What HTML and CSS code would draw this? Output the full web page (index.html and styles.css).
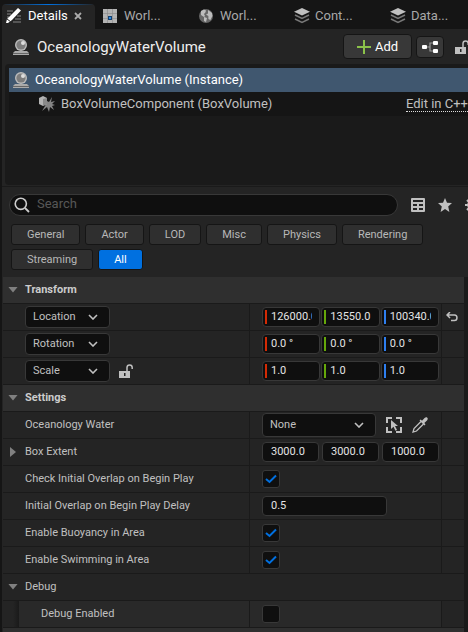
FILE: index.html
```html
<!DOCTYPE html>
<html lang="en">
<head>
<meta charset="utf-8">
<meta name="viewport" content="width=device-width, initial-scale=1">
<title>Details</title>
<link rel="stylesheet" href="styles.css">
</head>
<body>
<svg class="defs" aria-hidden="true">
  <symbol id="actor" viewBox="0 0 16 16">
    <path d="M0 16v-2l2-2h12l2 2v2z" fill="#aaa"/><path d="M0 14h16v1H0z" fill="#666"/>
    <circle cx="8" cy="6" r="6" fill="#bbb"/><circle cx="8" cy="6" r="4.6" fill="#7d7d7d"/><circle cx="10" cy="4" r="2" fill="#ddd"/>
  </symbol>
  <symbol id="chevron" viewBox="0 0 10 6"><path d="M1 1l4 4 4-4" fill="none" stroke="#c0c0c0" stroke-width="1.6"/></symbol>
  <symbol id="layers" viewBox="0 0 16 16">
    <path d="M8 0l8 3.7-8 3.8-8-3.8z" fill="#c0c0c0"/>
    <path d="M1 7l7 3.4L15 7M1 11l7 3.4 7-3.4" fill="none" stroke="#777" stroke-width="1.6"/>
  </symbol>
  <symbol id="lock" viewBox="0 0 14 14">
    <path d="M0 7h11v7H0z" fill="#c0c0c0"/><path d="M5 9h1.5v3H5z" fill="#222"/>
    <path d="M8 7V3.5C8 0 13.2 0 13.2 3.5V5" fill="none" stroke="#c0c0c0" stroke-width="1.5"/>
  </symbol>
</svg>

<nav class="tabs">
  <a class="tab active" href="#details">
    <svg class="i16" viewBox="0 0 16 16"><path d="M7 3H1M5 6H1M3 9H1M9 11h6M7 14h8M11 8h4" stroke="#666" stroke-width="1.4"/><path d="M12 0l3 2.6L6 12l-4 3H0l1-4z" fill="#fff"/><path d="M1 11l3.5 2.6" stroke="#242424"/></svg>
    <span>Details</span>
    <svg class="close" viewBox="0 0 8 8"><path d="M1 1l6 6M7 1L1 7" stroke="#aaa" stroke-width="1.8"/></svg>
  </a>
  <a class="tab" href="#world-1">
    <svg class="i14" viewBox="0 0 14 14"><path d="M0 0h14v14H0z" fill="#b4b4b4"/><path d="M4.5 0v14M9.5 0v14M0 4.5h14M0 9.5h14" stroke="#888" stroke-width=".6"/><path d="M5 7h4v4H5z" fill="#15406f"/><path d="M6 8h2v2H6z" fill="#2f8be0"/></svg>
    <span>Worl...</span>
  </a>
  <a class="tab" href="#world-2">
    <svg class="i14" viewBox="0 0 14 14"><circle cx="7" cy="7" r="7" fill="#676767"/><path d="M2 2l3-1.6 2 1-.6 2L5 5l1 2-1 1-3-2zM9 1l4 3 .4 3-2 4-2-1V7L7 5.500l2-1zM5 8l3 1-1 4-2-1z" fill="#bdbdbd"/></svg>
    <span>Worl...</span>
  </a>
  <a class="tab" href="#content">
    <svg class="i16"><use href="#layers"/></svg><span>Cont...</span>
  </a>
  <a class="tab" href="#data">
    <svg class="i16"><use href="#layers"/></svg><span>Data...</span>
  </a>
</nav>

<main class="panel" id="details">
  <header class="head">
    <svg class="i16"><use href="#actor"/></svg>
    <h1>OceanologyWaterVolume</h1>
    <button class="btn add" type="button"><svg class="i14" viewBox="0 0 14 14"><path d="M7 0v14M0 7h14" stroke="#8bc24a" stroke-width="2"/></svg>Add</button>
    <button class="btn graph" type="button" aria-label="Blueprint"><svg viewBox="0 0 16 12"><path d="M4 6h4M12 2H8v8h4" fill="none" stroke="#999" stroke-width="1.2"/><rect y="4" width="5" height="4" rx="1" fill="#fff"/><rect x="11" width="5" height="4" rx="1" fill="#fff"/><rect x="11" y="8" width="5" height="4" rx="1" fill="#fff"/></svg></button>
    <button class="plain" type="button" aria-label="Lock"><svg class="i14"><use href="#lock"/></svg></button>
  </header>

  <section class="tree">
    <div class="node selected"><svg class="i16"><use href="#actor"/></svg><span>OceanologyWaterVolume (Instance)</span></div>
    <div class="node child">
      <svg class="i16" viewBox="0 0 16 16"><path d="M8 5l2 1 3-5-1 5 4-1-3 3 3 1-3 1 2 4-4-3-1 5-2-5-5 4 3-5z" fill="#858585"/><path d="M0 2l4-2 4 2v6l-4 2-4-2z" fill="#b4b4b4"/><path d="M4 3l4-1v6l-4 2z" fill="#8a8a8a"/></svg>
      <span>BoxVolumeComponent (BoxVolume)</span><a href="#edit">Edit in C++</a>
    </div>
  </section>

  <div class="searchbar">
    <label class="search"><svg class="i16" viewBox="0 0 16 16"><circle cx="6.800" cy="6.800" r="5.600" fill="none" stroke="#ccc" stroke-width="1.600"/><path d="M11 11l4 4" stroke="#ccc" stroke-width="1.800"/></svg><input type="text" placeholder="Search" aria-label="Search"></label>
    <button class="plain" type="button" aria-label="Property matrix"><svg class="i14" viewBox="0 0 14 14"><rect width="14" height="14" rx="1" fill="#c0c0c0"/><path d="M2 2h10v2H2zM2 6h4v2H2zM8 6h4v2H8zM2 10h4v2H2zM8 10h4v2H8z" fill="#242424"/></svg></button>
    <button class="plain" type="button" aria-label="Favorites"><svg class="i14" viewBox="0 0 14 14"><path d="M7 0l2 4.700 5 .4-3.800 3.300L11.400 14 7 11l-4.400 3 1.200-5.600L0 5.100l5-.4z" fill="#c0c0c0"/></svg></button>
    <button class="plain" type="button" aria-label="Settings"><svg class="i14" viewBox="0 0 14 14"><circle cx="7" cy="7" r="3.800" fill="none" stroke="#c0c0c0" stroke-width="2"/><path d="M7 0v3M7 11v3M0 7h3M11 7h3M2 2l2 2M10 10l2 2M2 12l2-2M10 4l2-2" stroke="#c0c0c0" stroke-width="2"/></svg></button>
  </div>

  <div class="filters">
    <button type="button">General</button><button type="button">Actor</button><button type="button">LOD</button><button type="button">Misc</button><button type="button">Physics</button><button type="button">Rendering</button><button type="button">Streaming</button><button type="button" class="on">All</button>
  </div>

  <form class="props">
    <h2 class="group"><i class="arrow down"></i>Transform</h2>
    <div class="row">
      <div class="name"><span class="drop mode"><select aria-label="Location mode"><option>Location</option></select><svg><use href="#chevron"/></svg></span></div>
      <div class="value xyz"><input class="x" aria-label="Location X" value="126000.0"><input class="y" aria-label="Location Y" value="13550.0"><input class="z" aria-label="Location Z" value="100340.0"></div>
      <div class="reset"><button class="plain" type="button" aria-label="Reset to default"><svg viewBox="0 0 12 10"><path d="M4 0L1 3l3 3M1 3h7.500c3.300 0 3.300 5.500 0 5.500H5" fill="none" stroke="#c0c0c0" stroke-width="1.500"/></svg></button></div>
    </div>
    <div class="row">
      <div class="name"><span class="drop mode"><select aria-label="Rotation mode"><option>Rotation</option></select><svg><use href="#chevron"/></svg></span></div>
      <div class="value xyz"><input class="x" aria-label="Rotation X" value="0.0 °"><input class="y" aria-label="Rotation Y" value="0.0 °"><input class="z" aria-label="Rotation Z" value="0.0 °"></div>
      <div class="reset"></div>
    </div>
    <div class="row">
      <div class="name"><span class="drop mode"><select aria-label="Scale mode"><option>Scale</option></select><svg><use href="#chevron"/></svg></span><button class="plain" type="button" aria-label="Lock scale"><svg class="i14"><use href="#lock"/></svg></button></div>
      <div class="value xyz"><input class="x" aria-label="Scale X" value="1.0"><input class="y" aria-label="Scale Y" value="1.0"><input class="z" aria-label="Scale Z" value="1.0"></div>
      <div class="reset"></div>
    </div>

    <h2 class="group"><i class="arrow down"></i>Settings</h2>
    <div class="row">
      <label class="name" for="water">Oceanology Water</label>
      <div class="value asset">
        <span class="drop"><select id="water"><option>None</option></select><svg><use href="#chevron"/></svg></span>
        <button class="plain" type="button" aria-label="Use selected"><svg class="i16" viewBox="0 0 16 16"><path d="M1 6V1h5M10 1h5v5M15 10v5h-5M6 15H1v-5" fill="none" stroke="#c0c0c0" stroke-width="2"/><path d="M5 3l7 6H9l2 4-1.600.8-1.900-4L5 12z" fill="#c0c0c0"/></svg></button>
        <button class="plain" type="button" aria-label="Pick actor"><svg class="i16" viewBox="0 0 16 16"><path d="M9 4.500L2 11.500 1 15l3.500-1 7-7" fill="none" stroke="#c0c0c0" stroke-width="1.300"/><path d="M7.500 3.500l1.200-1L10 3.700 12.600 1c2-2 4.400.4 2.400 2.400L12.300 6l1.200 1.300-1 1.200z" fill="#c0c0c0"/></svg></button>
      </div>
      <div class="reset"></div>
    </div>
    <div class="row">
      <label class="name" for="extent-x"><i class="arrow right"></i>Box Extent</label>
      <div class="value extent"><input id="extent-x" value="3000.0"><input aria-label="Box Extent Y" value="3000.0"><input aria-label="Box Extent Z" value="1000.0"></div>
      <div class="reset"></div>
    </div>
    <div class="row">
      <label class="name" for="overlap">Check Initial Overlap on Begin Play</label>
      <div class="value"><input type="checkbox" id="overlap" checked><svg class="tick" viewBox="0 0 12 10"><path d="M1 5l3.500 3L11 1.500" /></svg></div>
      <div class="reset"></div>
    </div>
    <div class="row">
      <label class="name" for="delay">Initial Overlap on Begin Play Delay</label>
      <div class="value"><input class="delay" id="delay" value="0.5"></div>
      <div class="reset"></div>
    </div>
    <div class="row">
      <label class="name" for="buoyancy">Enable Buoyancy in Area</label>
      <div class="value"><input type="checkbox" id="buoyancy" checked><svg class="tick" viewBox="0 0 12 10"><path d="M1 5l3.500 3L11 1.500" /></svg></div>
      <div class="reset"></div>
    </div>
    <div class="row">
      <label class="name" for="swimming">Enable Swimming in Area</label>
      <div class="value"><input type="checkbox" id="swimming" checked><svg class="tick" viewBox="0 0 12 10"><path d="M1 5l3.500 3L11 1.500" /></svg></div>
      <div class="reset"></div>
    </div>
    <h3 class="group sub"><i class="arrow down"></i>Debug</h3>
    <div class="row nested">
      <label class="name" for="debug">Debug Enabled</label>
      <div class="value"><input type="checkbox" id="debug"></div>
      <div class="reset"></div>
    </div>
    <div class="next"></div>
  </form>
</main>
</body>
</html>
```
FILE: styles.css
```css
* { box-sizing: border-box; }
html { height: 100%; overflow: hidden; background: #151515; }
body {
  margin: 0;
  height: 100%;
  display: flex;
  flex-direction: column;
  overflow: hidden;
  color: #c0c0c0;
  font: 11px/16px Roboto, sans-serif;
}
button, input, select { font: inherit; color: inherit; margin: 0; border-radius: 4px; }
svg { display: block; flex: none; }
.defs { position: absolute; width: 0; height: 0; }
.i16 { width: 16px; height: 16px; }
.i14 { width: 14px; height: 14px; }
.plain { display: flex; flex: none; padding: 0; border: 0; background: none; }

.tabs { display: flex; flex: none; height: 29px; padding: 4px 0 0 2px; overflow: hidden; }
.tab {
  display: flex;
  flex: 0 0 96px;
  align-items: center;
  gap: 7px;
  padding: 0 0 2px 8px;
  color: #a8a8a8;
  font-size: 13px;
  text-decoration: none;
}
.tab:nth-child(n+4) { gap: 5px; padding-left: 7px; }
.tab.active {
  flex-basis: 93px;
  gap: 6px;
  padding-left: 4px;
  color: #fff;
  border-radius: 4px 4px 0 0;
  background: linear-gradient(90deg, #242424, #0070e0 50%, #242424) top / 100% 1px no-repeat, #242424;
}
.close { width: 8px; height: 8px; }

.panel { flex: 1 0 auto; margin-left: 2px; background: #242424; overflow-x: clip; }
.head { display: flex; align-items: center; height: 35px; padding-left: 11px; margin-right: -1px; }
.head h1 { flex: 1; margin: 0 0 0 8px; font-size: 15px; font-weight: 400; color: #eee; }
.btn {
  display: flex;
  flex: none;
  align-items: center;
  justify-content: center;
  padding: 0;
  border: 1px solid #151515;
  background: #383838;
}
.add { width: 69px; height: 25px; gap: 4px; font-size: 13px; color: #fff; }
.graph { width: 28px; height: 22px; margin: 0 11px 0 4px; }
.graph svg { width: 16px; height: 12px; }

.tree { height: 121px; margin-left: 3px; padding: 4px 0 0 4px; border-radius: 4px 0 0 4px; background: #1a1a1a; }
.node { display: flex; align-items: center; gap: 6px; height: 24px; padding-left: 4px; font-size: 13px; background: #151515; }
.node.selected { background: #40576f; color: #fff; }
.node.child { padding-left: 30px; }
.node.child a { margin-left: auto; color: #c0c0c0; text-decoration: none; line-height: 15px; border-bottom: 1px dotted #ddd; }

.searchbar { display: flex; align-items: center; gap: 13px; margin: 1px -11px 0 0; padding: 7px 0 8px 7px; border-top: 1px solid #1a1a1a; }
.search { display: flex; flex: 1; align-items: center; gap: 7px; height: 22px; padding-left: 4px; border: 1px solid #383838; border-radius: 11px; background: #0f0f0f; }
.search input { flex: 1; min-width: 0; padding: 0 0 2px; border: 0; outline: 0; background: none; font-size: 13px; }
.search input::placeholder { color: #575757; opacity: 1; }

.filters { display: flex; flex-wrap: wrap; gap: 4px 5px; padding: 0 40px 7px 9px; }
.filters button { height: 21px; padding: 0 15px; border: 1px solid #151515; border-radius: 3px; background: #2f2f2f; color: #b8b8b8; }
.filters .on { background: #0070e0; color: #fff; }

.props { margin: 0 4px 0 1px; box-shadow: 4px 0 #1a1a1a; }
.group { display: flex; align-items: center; height: 27px; margin: 0; padding: 0 0 1px 22px; border-bottom: 1px solid #1a1a1a; background: #2f2f2f; font-size: 11px; font-weight: 700; color: #ccc; position: relative; }
.group.sub { background: #242424; font-weight: 400; color: #c0c0c0; }
.arrow { position: absolute; background: #808080; }
.arrow.down { left: 5px; width: 10px; height: 6px; clip-path: polygon(0 0, 100% 0, 50% 100%); }
.arrow.right { left: 7px; width: 6px; height: 10px; clip-path: polygon(0 0, 100% 50%, 0 100%); }

.row { display: grid; grid-template-columns: 247px minmax(0, 1fr) 23px; height: 27px; border-bottom: 1px solid #1a1a1a; }
.name { position: relative; display: flex; align-items: center; gap: 9px; padding-left: 22px; border-right: 1px solid #1a1a1a; }
.value { position: relative; display: flex; align-items: center; padding: 0 2px 0 12px; }
.reset { display: flex; align-items: center; padding-left: 4px; border-left: 1px solid #1a1a1a; }
.reset svg { width: 12px; height: 10px; }
.value input { min-width: 0; height: 20px; padding: 0 7px 2px 8px; border: 1px solid #383838; background: #0f0f0f; font-size: 11px; color: #e4e4e4; }
.xyz { gap: 1px; }
.extent { gap: 3px; }
.xyz input, .extent input { flex: 1; }
.xyz input { background: linear-gradient(var(--axis), var(--axis)) 2px 2px / 2px 14px no-repeat, #0f0f0f; }
.x { --axis: #d42a04; }
.y { --axis: #66a80a; }
.z { --axis: #2e7ff0; }
.value .delay { width: 125px; }

.drop { position: relative; display: flex; width: 114px; height: 24px; }
.drop select { width: 100%; padding: 0 0 1px 7px; border: 1px solid #383838; background: #0f0f0f; appearance: none; }
.drop svg { position: absolute; right: 12px; top: 50%; width: 10px; height: 6px; margin-top: -3px; pointer-events: none; }
.drop.mode { width: 85px; height: 22px; }
.asset { gap: 10px; }

.value input[type="checkbox"] { appearance: none; width: 18px; height: 18px; padding: 0; border-radius: 3px; }
.tick { position: absolute; left: 15px; width: 12px; height: 10px; fill: none; stroke: #0070e0; stroke-width: 2; pointer-events: none; }
.tick { visibility: hidden; }
input:checked + .tick { visibility: visible; }

.nested { background: linear-gradient(90deg, #242424 10px, #1a1a1a 16px, #292929 16px); }
.nested .name { padding-left: 38px; }
.nested .reset { background: #242424; }
.next { height: 4px; background: #2f2f2f; }
```
